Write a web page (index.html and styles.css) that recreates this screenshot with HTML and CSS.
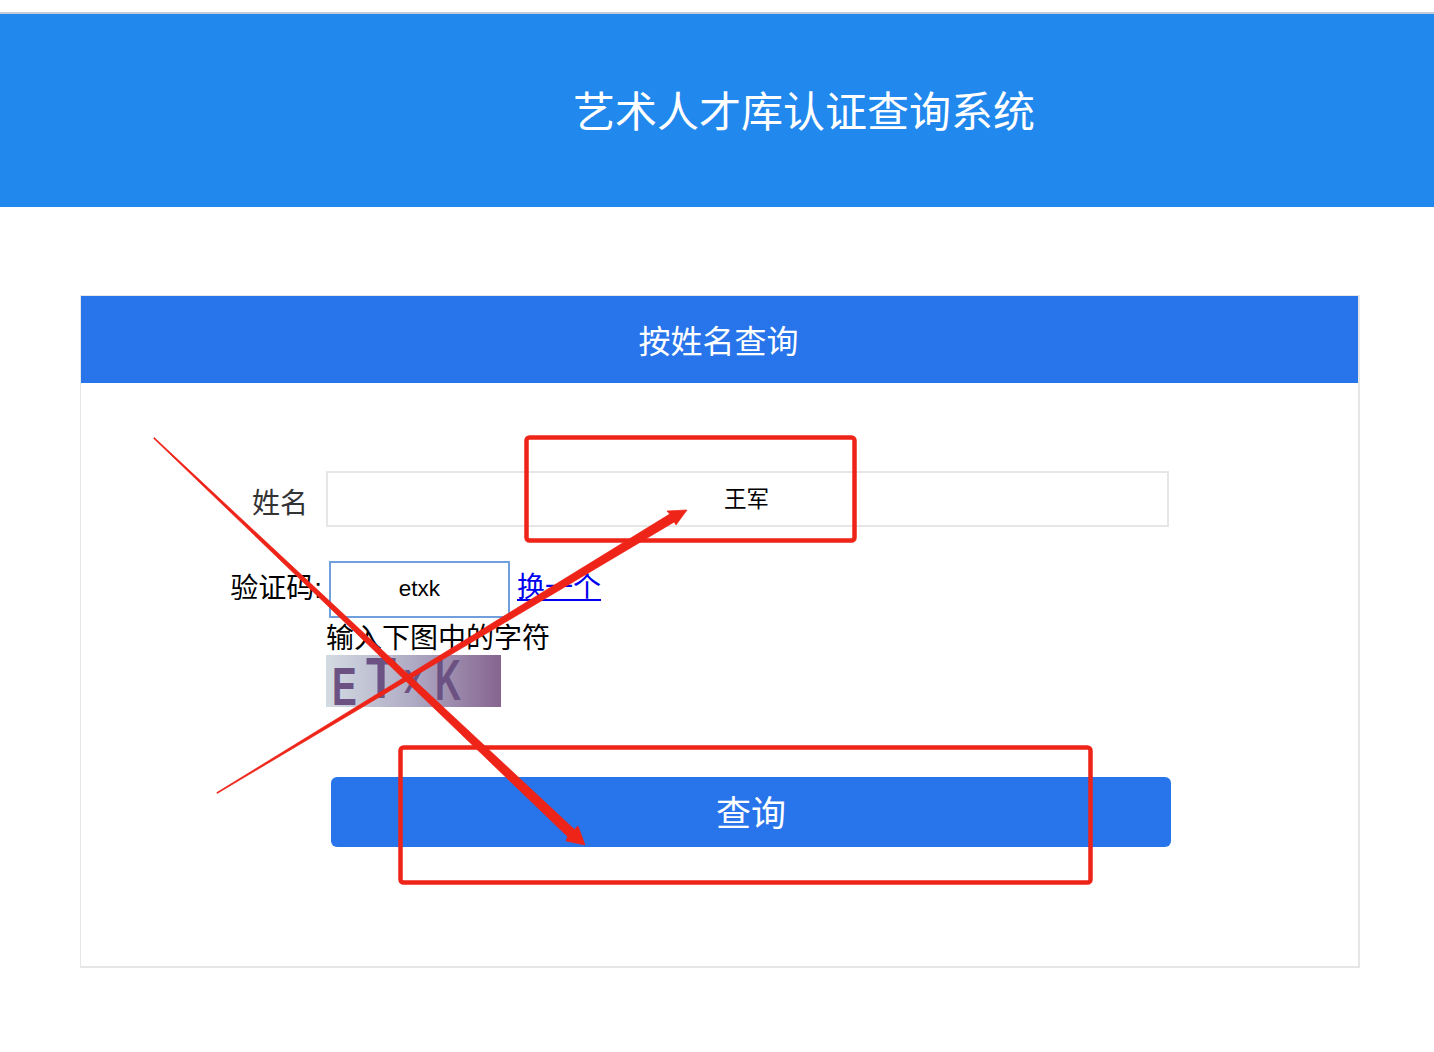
FILE: index.html
```html
<!DOCTYPE html>
<html lang="zh-CN">

<head>
    <meta charset="UTF-8">
    <title>艺术人才库认证查询系统</title>
    <link rel="stylesheet" href="styles.css">
</head>

<body>
    <div class="top-bar">
        <h1 class="site-title">艺术人才库认证查询系统</h1>
    </div>

    <div class="panel">
        <h2 class="panel-title">按姓名查询</h2>
        <form class="query-form">
            <div class="name-row">
                <label class="name-label">姓名</label>
                <input class="name-input" type="text" value="王军">
            </div>
            <div class="code-row">
                <label class="code-label">验证码:</label>
                <input class="code-input" type="text" value="etxk">
                <a class="code-change" href="#">换一个</a>
            </div>
            <div class="code-hint">输入下图中的字符</div>
            <svg class="code-image" width="175" height="52" viewBox="0 0 175 52">
                <defs>
                    <linearGradient id="code-bg">
                        <stop offset="0" stop-color="#d3dbe2"/>
                        <stop offset="0.5" stop-color="#aeaac4"/>
                        <stop offset="1" stop-color="#86648f"/>
                    </linearGradient>
                </defs>
                <rect width="175" height="52" fill="url(#code-bg)"/>
                <g class="code-letters">
                    <text transform="translate(6 50) scale(.7 1)" font-size="53">E</text>
                    <text transform="translate(40 43) scale(.85 1)" font-size="58">T</text>
                    <text transform="translate(78 38) scale(.85 1)" font-size="34">X</text>
                    <text transform="translate(109 45) scale(.62 1)" font-size="58">K</text>
                </g>
            </svg>
            <button class="query-button" type="button">查询</button>
        </form>
    </div>

    <!-- red marks drawn on top of the screenshot -->
    <svg class="marks" width="1434" height="1052" viewBox="0 0 1434 1052">
        <rect class="mark-box" x="526.5" y="437.5" width="328" height="103" rx="3"/>
        <rect class="mark-box" x="400.5" y="747.5" width="690" height="135" rx="3"/>
        <polygon class="mark-arrow" points="154.3,437.6 574.4,829.4 578,826 585,845 566,841 567.6,836.6 153.7,438.4"/>
        <polygon class="mark-arrow" points="216.8,792.6 669.7,514.1 667,511 687,510 676,525 674.3,521.9 217.2,793.4"/>
    </svg>
</body>

</html>
```

FILE: styles.css
```css
body {
    margin: 0;
    height: 1052px;
    overflow: hidden;
    background-color: white;
    font-family: "Liberation Sans", "Noto Sans CJK SC", sans-serif;
    color: black;
}

.top-bar {
    margin-top: 12px;
    height: 193px;
    border-top: 2px solid #c6ccd6;
    background-color: #2188ee;
    display: flex;
    align-items: center;
    padding-left: 573px;
}

.site-title {
    margin: -4px 0 0;
    font-size: 42px;
    font-weight: normal;
    color: white;
}

.panel {
    margin: 88px 74px 0 80px;
    height: 670px;
    border: 2px solid #e6e6e6;
    border-top-width: 1px;
    border-left-width: 1px;
}

.panel-title {
    margin: 0;
    height: 87px;
    line-height: 93px;
    padding-right: 2px;
    background-color: #2874ea;
    color: white;
    font-size: 32px;
    font-weight: normal;
    text-align: center;
}

.query-form {
    padding-top: 88px;
}

.name-row {
    display: flex;
    align-items: center;
    height: 56px;
}

.name-label {
    width: 227px;
    padding-top: 4px;
    text-align: right;
    font-size: 28px;
    color: #333;
    margin-right: 18px;
}

.name-input {
    box-sizing: border-box;
    width: 843px;
    height: 56px;
    padding: 0 2px 4px 0;
    border: 2px solid #e6e6e6;
    text-align: center;
    font-family: inherit;
    font-size: 22.5px;
    color: black;
    outline: none;
}

.code-row {
    display: flex;
    align-items: center;
    margin-top: 34px;
    height: 57px;
}

.code-label {
    width: 241px;
    text-align: right;
    font-size: 28px;
    white-space: nowrap;
    margin-top: -8px;
}

.code-input {
    box-sizing: border-box;
    width: 181px;
    height: 57px;
    margin-left: 7px;
    padding: 0 0 1px 0;
    border: 2px solid #6f9fdc;
    text-align: center;
    font-family: inherit;
    font-size: 22.5px;
    color: black;
    outline: none;
}

.code-change {
    margin-left: 7px;
    margin-top: -10px;
    font-size: 28px;
    color: #0000ee;
}

.code-hint {
    margin: 4px 0 0 245px;
    font-size: 28px;
    line-height: 34px;
}

.code-image {
    display: block;
    margin: -1px 0 0 245px;
    overflow: visible;
}

.code-letters {
    font-family: "Liberation Sans", sans-serif;
    font-weight: bold;
    fill: #6c5283;
}

.query-button {
    display: block;
    width: 840px;
    height: 70px;
    margin: 70px 0 0 250px;
    padding: 0 0 3px;
    border: none;
    border-radius: 6px;
    background-color: #2874ea;
    color: white;
    font-family: inherit;
    font-size: 35px;
}

.marks {
    position: absolute;
    left: 0;
    top: 0;
}

.mark-box {
    fill: none;
    stroke: #ee2418;
    stroke-width: 4.5;
}

.mark-arrow {
    fill: #ee2418;
    stroke: #ee2418;
    stroke-width: 0.7;
}
```
